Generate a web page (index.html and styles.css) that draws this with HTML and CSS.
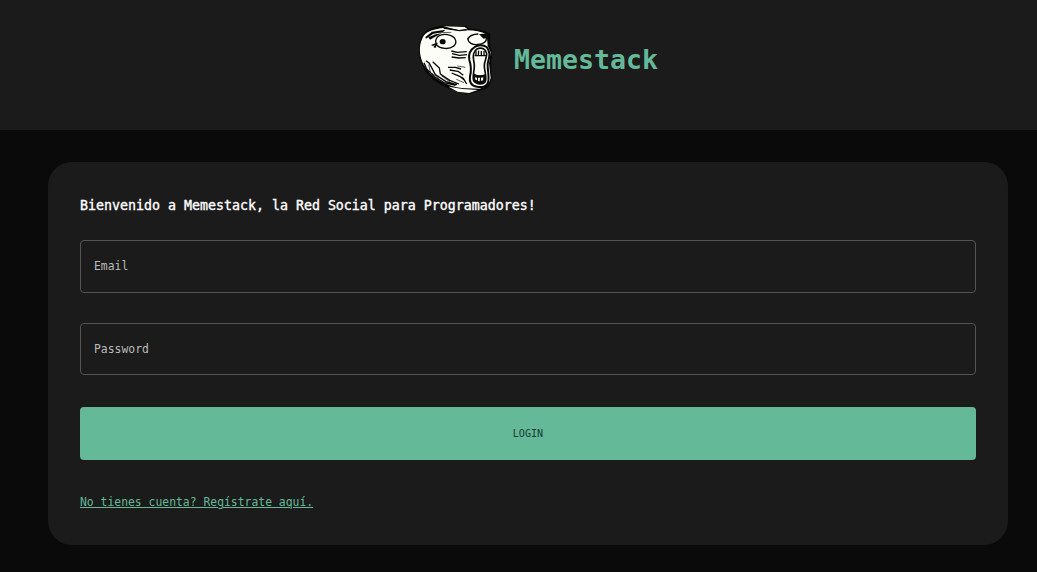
FILE: index.html
```html
<!DOCTYPE html>
<html lang="es">
<head>
<meta charset="utf-8">
<title>Memestack</title>
<link rel="stylesheet" href="styles.css">
</head>
<body>
<header class="header">
  <svg class="logo" viewBox="0 0 270 270" aria-hidden="true">
    <path class="outline" d="M36 68C46 44 68 38 98 34L168 36L177 43Q215 44 238 57L238 92Q247 110 241 145L243 190Q240 220 210 225L180 234Q152 234 128 222C95 213 60 190 42 157C28 130 25 95 36 68Z"/>
    <path class="skin" d="M38 68C46 49 70 43 99 39Q140 49 172 46Q205 46 230 58L233 92L242 112L237 145L242 188Q238 216 208 221L170 220Q140 220 112 208C84 197 56 177 42 150C28 126 25 92 38 68Z"/>
    <path class="skin" d="M100 34L164 36L173 43L146 46ZM116 215L158 222L203 225L177 234L143 230Z"/>
    <path class="ink" d="M46 66L66 50L106 44L100 50L69 57L48 71ZM55 67L77 58L96 55L78 64L60 74ZM66 92L80 84L79 90ZM72 97L79 91L78 98Z"/>
    <path class="line" d="M101 39L148 47L170 44M77 78C80 56 105 56 121 61C140 68 142 86 130 94C118 104 91 102 80 90Q77 85 77 78M65 91L81 85L72 97M175 70Q181 58 205 57M173 68C174 84 188 91 203 88C221 88 230 79 230 66"/>
    <ellipse class="ink" cx="98" cy="80" rx="9" ry="8"/>
    <path class="ink" d="M207 58L230 55L233 68L221 71Z"/>
    <path class="line" d="M124 108L142 112L170 110M126 116L148 121L171 119M125 126L147 129L167 128M114 157L136 157L153 162M119 165L144 169L160 181M125 174L149 184L162 194M141 180L160 190L170 207M48 137L58 145L76 179L108 200L141 209M68 140L88 159L91 177L119 196L147 207M42 143L50 162L74 186L102 203L137 211"/>
    <path class="hair" d="M84 53L124 52M142 153L166 157M139 193L162 203M93 181L121 202M56 149L61 171L88 192"/>
    <path class="mouth" d="M193 97C204 88 220 89 230 96C239 106 240 124 234 141C230 155 238 177 235 199C232 216 216 218 201 215C184 213 177 201 180 184C184 169 184 153 178 135C175 120 180 105 193 97Z"/>
    <path class="lip" d="M202 101C215 96 228 102 230 116C231 128 223 139 223 151C222 165 231 182 226 199C221 209 200 209 192 199C185 187 194 169 193 151C193 139 187 129 191 116C193 108 197 104 202 101Z"/>
    <path class="line" d="M194 122L229 122M198 109L198 121M206 107L205 121M214 108L214 121M222 108L222 121M192 178Q207 187 226 180L225 200Q208 208 193 198Z"/>
    <path class="ink" d="M190 180L226 184L225 200L207 204L194 198Z"/>
    <path class="teeth" d="M195 187L201 188L201 196L196 194ZM204 188L210 188L209 199L204 198ZM213 188L220 187L219 196L213 198Z"/>
    <circle class="ink" cx="241" cy="59" r="1.5"/>
  </svg>
  <h1 class="brand">Memestack</h1>
</header>
<main class="card">
  <h2 class="welcome">Bienvenido a Memestack, la Red Social para Programadores!</h2>
  <form class="form">
    <input class="field" type="email" placeholder="Email" aria-label="Email">
    <input class="field field-password" type="password" placeholder="Password" aria-label="Password">
    <button class="login" type="button">LOGIN</button>
  </form>
  <a class="register" href="#">No tienes cuenta? Regístrate aquí.</a>
</main>
</body>
</html>
```
FILE: styles.css
```css
* { box-sizing: border-box; }
body {
  margin: 0;
  min-height: 572px;
  background: #0a0a0a;
  color: #fff;
  font-family: "DejaVu Sans Mono", monospace;
}
.header {
  display: flex;
  align-items: center;
  justify-content: center;
  gap: 14px;
  height: 130px;
  padding: 0 0 10px 31px;
  background: #1b1b1b;
}
.logo { width: 90px; height: 90px; }
.outline { fill: #080808; stroke: #080808; stroke-width: 5; }
.skin, .teeth { fill: #fdfdf8; }
.ink { fill: #080808; }
.line, .hair { fill: none; stroke: #080808; stroke-width: 4; stroke-linejoin: round; }
.hair { stroke-width: 2; }
.mouth { fill: #fdfdf8; stroke: #080808; stroke-width: 6; }
.lip { fill: #fdfdf8; stroke: #080808; stroke-width: 5; }
.brand {
  margin: 0;
  color: #64b998;
  font-size: 26.58px;
  line-height: 32px;
  font-weight: 700;
}
.card {
  display: flex;
  flex-direction: column;
  align-items: flex-start;
  width: 960px;
  height: 383px;
  margin: 32px 0 0 48px;
  padding: 32px;
  border-radius: 24px;
  background: #1b1b1b;
}
.welcome {
  margin: 0 0 22px;
  font-size: 13.29px;
  line-height: 24px;
  font-weight: 400;
  -webkit-text-stroke: 0.35px #fff;
}
.form { display: flex; flex-direction: column; width: 100%; }
.field {
  height: 53px;
  margin: 0 0 30px;
  padding: 0 13px 2px;
  border: 1px solid #545454;
  border-radius: 4px;
  background: transparent;
  color: #fff;
  font-family: inherit;
  font-size: 11.4px;
}
.field::placeholder { color: #bababa; opacity: 1; }
.field-password { height: 52px; margin-bottom: 32px; padding-bottom: 0; }
.login {
  height: 53px;
  padding: 0;
  border: 0;
  border-radius: 4px;
  background: #64b998;
  color: #1b3a35;
  font-family: inherit;
  font-size: 10.1px;
}
.register {
  margin-top: 32px;
  color: #64b998;
  font-size: 11.4px;
  line-height: 20px;
  text-decoration: underline;
  text-decoration-thickness: 1px;
  text-underline-offset: 1px;
}
```
